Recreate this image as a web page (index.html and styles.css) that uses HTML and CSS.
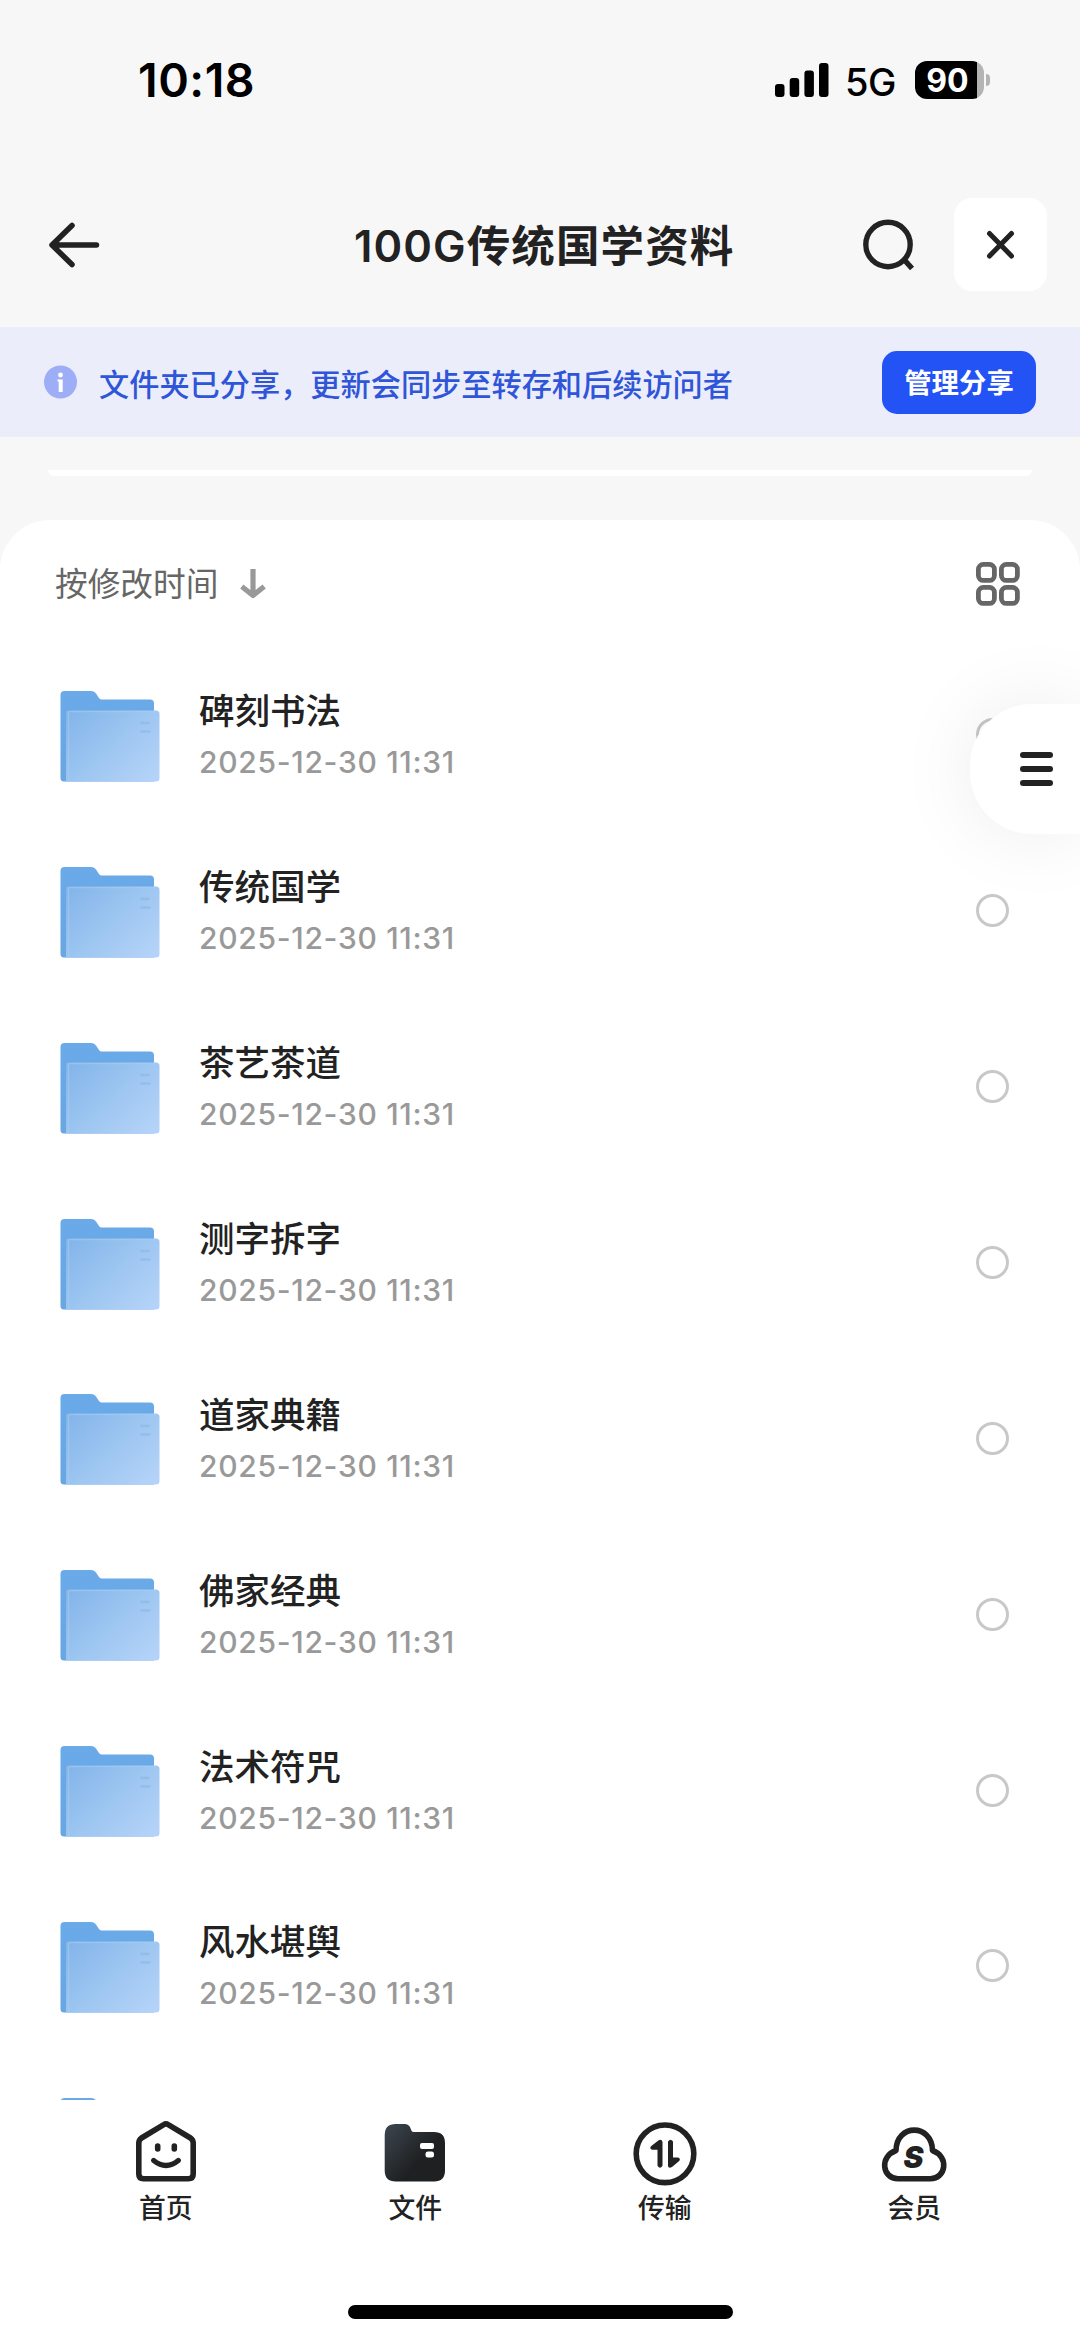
FILE: index.html
```html
<!DOCTYPE html>
<html lang="zh-CN">
<head>
    <meta charset="UTF-8">
    <meta name="viewport" content="width=device-width, initial-scale=1.0">
    <title>100G传统国学资料</title>
    <link rel="stylesheet" href="styles.css">
</head>
<body>
    <!-- shared folder icon -->
    <svg class="defs" width="0" height="0">
        <defs>
            <linearGradient id="folderBack" x1="0" y1="0" x2="0" y2="1">
                <stop offset="0" stop-color="#6aaae9"/>
                <stop offset="1" stop-color="#69a6e2"/>
            </linearGradient>
            <linearGradient id="folderFront" x1="0" y1="0.1" x2="1" y2="0.9">
                <stop offset="0" stop-color="#84b5ea"/>
                <stop offset="0.5" stop-color="#9dc6f1"/>
                <stop offset="1" stop-color="#b5d3f8"/>
            </linearGradient>
            <linearGradient id="tabFolder" x1="0" y1="0.1" x2="0.6" y2="0.6">
                <stop offset="0" stop-color="#3a444d"/>
                <stop offset="1" stop-color="#1f2021"/>
            </linearGradient>
            <symbol id="folder" viewBox="0 0 100 92">
                <path d="M.5 5q0-4 4-4h27q3 0 4.500 2.500l3 4.500q1 1.500 3 1.500h48q4 0 4 4v78h-90q-3.500 0-3.500-3.500z" fill="url(#folderBack)"/>
                <path d="M6 22q0-1.500 1.500-1.500h88.500q3.500 0 3.500 3.500v64q0 3.500-3.500 3.500h-90z" fill="url(#folderFront)"/>
                <path d="M8.500 91.500v-68q0-2 2-2h86" fill="none" stroke="#a9cdf3" stroke-width="1.500" opacity="0.5"/>
                <path d="M80.500 33h9M80.500 41.500h10" stroke="#84b0e0" stroke-width="2.500" opacity="0.45"/>
            </symbol>
        </defs>
    </svg>

    <div class="phone">
        <div class="status-bar">
            <span class="time">10:18</span>
            <div class="status-icons">
                <svg class="signal" width="54" height="34" viewBox="0 0 54 34">
                    <rect x="0" y="21" width="9.500" height="13" rx="3"/>
                    <rect x="14.700" y="15" width="9.500" height="19" rx="3"/>
                    <rect x="29.400" y="7.500" width="9.500" height="26.500" rx="3"/>
                    <rect x="44" y="0" width="9.500" height="34" rx="3"/>
                </svg>
                <span class="network">5G</span>
                <div class="battery"><span>90</span></div>
                <div class="battery-cap"></div>
            </div>
        </div>

        <header class="nav">
            <svg class="back" width="54" height="48" viewBox="0 0 54 48">
                <path d="M25 4.500L5 24L25 43.500M6 24h43.500" fill="none" stroke="#222" stroke-width="5.500" stroke-linecap="round" stroke-linejoin="round"/>
            </svg>
            <h1>100G传统国学资料</h1>
            <div class="nav-actions">
                <svg width="54" height="52" viewBox="0 0 54 52">
                    <circle cx="25" cy="25.500" r="22.200" fill="none" stroke="#222" stroke-width="5.400"/>
                    <path d="M41.500 41l7.500 8.500" stroke="#222" stroke-width="5.400"/>
                </svg>
                <div class="close">
                    <svg width="30" height="30" viewBox="0 0 30 30">
                        <path d="M3.500 3.500l22 22.500M25.500 3.500l-22 22.500" stroke="#222" stroke-width="5" stroke-linecap="round"/>
                    </svg>
                </div>
            </div>
        </header>

        <div class="notice">
            <svg width="34" height="34" viewBox="0 0 34 34">
                <circle cx="16.500" cy="17" r="16.500" fill="#9eaef6"/>
                <circle cx="16.500" cy="10" r="2.400" fill="#fff"/>
                <path d="M13.500 14.500h5.200v12.500h-4v-10.500h-1.200z" fill="#fff"/>
            </svg>
            <p>文件夹已分享，更新会同步至转存和后续访问者</p>
            <button>管理分享</button>
        </div>

        <div class="card-edge"></div>

        <main class="sheet">
            <div class="toolbar">
                <div class="sort">
                    <span>按修改时间</span>
                    <svg width="28" height="30" viewBox="0 0 28 30">
                        <path d="M14 0v26M2.800 17.500L14 26.500L25.200 17.500" fill="none" stroke="#999" stroke-width="5.200" stroke-linejoin="round" stroke-linecap="butt"/>
                    </svg>
                </div>
                <svg width="44" height="44" viewBox="0 0 44 44" fill="none" stroke="#666" stroke-width="4.800">
                    <rect x="2.400" y="2.400" width="16" height="16" rx="5"/>
                    <rect x="25.400" y="2.400" width="16" height="16" rx="5"/>
                    <rect x="2.400" y="25.400" width="16" height="16" rx="5"/>
                    <rect x="25.400" y="25.400" width="16" height="16" rx="5"/>
                </svg>
            </div>

            <ul class="file-list">
                <li class="file">
                    <svg class="folder"><use href="#folder"/></svg>
                    <div class="info"><h2>碑刻书法</h2><p>2025-12-30 11:31</p></div>
                    <span class="radio"></span>
                </li>
                <li class="file">
                    <svg class="folder"><use href="#folder"/></svg>
                    <div class="info"><h2>传统国学</h2><p>2025-12-30 11:31</p></div>
                    <span class="radio"></span>
                </li>
                <li class="file">
                    <svg class="folder"><use href="#folder"/></svg>
                    <div class="info"><h2>茶艺茶道</h2><p>2025-12-30 11:31</p></div>
                    <span class="radio"></span>
                </li>
                <li class="file">
                    <svg class="folder"><use href="#folder"/></svg>
                    <div class="info"><h2>测字拆字</h2><p>2025-12-30 11:31</p></div>
                    <span class="radio"></span>
                </li>
                <li class="file">
                    <svg class="folder"><use href="#folder"/></svg>
                    <div class="info"><h2>道家典籍</h2><p>2025-12-30 11:31</p></div>
                    <span class="radio"></span>
                </li>
                <li class="file">
                    <svg class="folder"><use href="#folder"/></svg>
                    <div class="info"><h2>佛家经典</h2><p>2025-12-30 11:31</p></div>
                    <span class="radio"></span>
                </li>
                <li class="file">
                    <svg class="folder"><use href="#folder"/></svg>
                    <div class="info"><h2>法术符咒</h2><p>2025-12-30 11:31</p></div>
                    <span class="radio"></span>
                </li>
                <li class="file">
                    <svg class="folder"><use href="#folder"/></svg>
                    <div class="info"><h2>风水堪舆</h2><p>2025-12-30 11:31</p></div>
                    <span class="radio"></span>
                </li>
                <li class="file">
                    <svg class="folder"><use href="#folder"/></svg>
                </li>
            </ul>
        </main>

        <nav class="tab-bar">
            <div class="tabs">
                <div class="tab">
                    <svg width="68" height="68" viewBox="0 0 68 68" fill="none" stroke="#222" stroke-width="5.600" stroke-linecap="round" stroke-linejoin="round">
                        <path d="M31.800 5.600q2.200-1.400 4.400 0l22.300 13.400q2.700 2 2.700 5v31q0 4.800-4.800 4.800h-44.800q-4.800 0-4.800-4.800v-31q0-3 2.700-5z"/>
                        <path d="M25.700 27v3M42.300 27v3"/>
                        <path d="M21.700 41.500q12.300 10 24.600 0" stroke-width="5.200"/>
                    </svg>
                    <span>首页</span>
                </div>
                <div class="tab">
                    <svg width="68" height="68" viewBox="0 0 68 68">
                        <path d="M3.700 16q0-11 11-11h9q4 0 5.500 3.500l1.200 3q.7 1.500 2.300 1.500h20.300q11 0 11 11v27.500q0 11-11 11h-38.300q-11 0-11-11z" fill="url(#tabFolder)"/>
                        <rect x="39" y="24" width="14" height="6" rx="2" fill="#fff"/>
                        <rect x="44.500" y="32.500" width="8.500" height="6" rx="2.500" fill="#fff"/>
                    </svg>
                    <span>文件</span>
                </div>
                <div class="tab">
                    <svg width="68" height="68" viewBox="0 0 68 68">
                        <circle cx="34" cy="34.800" r="28.800" fill="none" stroke="#222" stroke-width="5.600"/>
                        <path d="M27 21.700q3.500-2.200 4.500 1v24q-2.500 4-5 0v-16h-5q-3.500-1-1.500-3.500z" fill="#222"/>
                        <path d="M37 22.500q2.500-3.500 5 0v16h5q3 1 1.200 3.500l-7.200 6q-3.500 2-4-1z" fill="#222"/>
                    </svg>
                    <span>传输</span>
                </div>
                <div class="tab">
                    <svg width="68" height="68" viewBox="0 0 68 68">
                        <path d="M18 59.700H50.300C66 59.700 69.500 37.500 52.500 31.500C52 4.300 16.400 4.300 16 31.500C-1 37.500 2.300 59.700 18 59.700z" fill="none" stroke="#222" stroke-width="5.600" stroke-linejoin="round"/>
                        <text x="33.500" y="48.800" class="cloud-letter">S</text>
                    </svg>
                    <span>会员</span>
                </div>
            </div>
            <div class="home-indicator"></div>
        </nav>

        <div class="float-menu">
            <span></span>
            <span></span>
            <span></span>
        </div>
    </div>
</body>
</html>
```
FILE: styles.css
```css
* {
    box-sizing: border-box;
    margin: 0;
    padding: 0;
}
body {
    font-family: Inter, "Noto Sans CJK SC", sans-serif;
    background-color: #f7f7f7;
    color: #222;
}
svg {
    display: block;
    flex: none;
}
.defs {
    position: absolute;
}
.phone {
    position: relative;
    display: flex;
    flex-direction: column;
    width: 1080px;
    height: 2341px;
    overflow: hidden;
}

/* status bar */
.status-bar {
    display: flex;
    justify-content: space-between;
    align-items: center;
    height: 160px;
    padding: 0 90px 0 138px;
    color: #000;
}
.time {
    font-size: 46.500px;
    font-weight: 600;
    letter-spacing: 0.5px;
}
.status-icons {
    display: flex;
    align-items: center;
}
.network {
    width: 52px;
    margin: 3px 18px 0 16px;
    font-size: 38px;
    font-weight: 500;
    letter-spacing: -0.5px;
}
.battery {
    display: flex;
    justify-content: center;
    align-items: center;
    width: 69px;
    height: 38px;
    padding-right: 4px;
    border-radius: 12px;
    background: linear-gradient(to right, #000 62px, #b4b4b4 62px);
    color: #fff;
    font-size: 32px;
    font-weight: 700;
}
.battery-cap {
    width: 4px;
    height: 12px;
    margin-left: 2px;
    border-radius: 0 6px 6px 0;
    background-color: #b4b4b4;
}

/* title bar */
.nav {
    display: flex;
    align-items: center;
    height: 167px;
    padding: 2px 33px 0 47px;
}
.nav h1 {
    flex: 1;
    margin: -2px 0 0 253px;
    font-size: 43.500px;
    font-weight: 600;
    letter-spacing: 1.1px;
    white-space: nowrap;
}
.nav-actions {
    display: flex;
    align-items: center;
    gap: 37px;
}
.close {
    display: flex;
    justify-content: center;
    align-items: center;
    width: 93px;
    height: 93px;
    border-radius: 18px;
    background-color: #fff;
}

/* share notice */
.notice {
    display: flex;
    align-items: center;
    height: 110px;
    padding: 0 44px;
    background-color: #ebedfb;
}
.notice p {
    flex: 1;
    margin: 1px 0 0 21px;
    color: #2f55d8;
    font-size: 30.200px;
    font-weight: 500;
    white-space: nowrap;
}
.notice button {
    width: 154px;
    height: 63px;
    padding-bottom: 2px;
    border: none;
    border-radius: 15px;
    background-color: #2352f5;
    color: #fff;
    font-family: inherit;
    font-size: 27.400px;
    font-weight: 700;
}
.card-edge {
    flex: none;
    height: 6px;
    margin: 33px 48px 44px;
    border-radius: 0 0 12px 12px;
    background-color: #fff;
}

/* file list */
.sheet {
    flex: 1;
    min-height: 0;
    overflow: hidden;
    border-radius: 50px 50px 0 0;
    background-color: #fff;
}
.toolbar {
    display: flex;
    justify-content: space-between;
    align-items: center;
    height: 128px;
    padding-left: 55px;
    padding-right: 60px;
}
.sort {
    display: flex;
    align-items: center;
    gap: 21px;
    color: #666;
    font-size: 32.700px;
}
.sort span {
    margin-top: -5px;
}
.file-list {
    list-style: none;
}
.file {
    display: flex;
    align-items: center;
    height: 175.860px;
    padding: 0 71px 0 60px;
}
.folder {
    width: 100px;
    height: 92px;
}
.info {
    flex: 1;
    margin: 3px 0 0 39px;
}
.info h2 {
    font-size: 35.500px;
    font-weight: 500;
    line-height: 51px;
}
.info p {
    color: #999;
    font-size: 30px;
    font-weight: 500;
    letter-spacing: 0.7px;
    line-height: 51px;
}
.radio {
    width: 33px;
    height: 33px;
    margin-bottom: 2px;
    border: 3px solid #c8c8c8;
    border-radius: 50%;
}

/* bottom tabs */
.tab-bar {
    display: flex;
    flex-direction: column;
    justify-content: space-between;
    align-items: center;
    height: 241px;
    padding: 19px 0 22px;
    background-color: #fff;
}
.tabs {
    display: flex;
    width: 998px;
}
.tab {
    flex: 1;
    display: flex;
    flex-direction: column;
    align-items: center;
    gap: 1px;
    font-size: 26.800px;
    font-weight: 500;
    line-height: 40px;
}
.cloud-letter {
    font-size: 30px;
    font-style: italic;
    font-weight: 900;
    text-anchor: middle;
    fill: #222;
}
.home-indicator {
    width: 385px;
    height: 14px;
    border-radius: 7px;
    background-color: #000;
}

/* side menu button, sits over the list */
.float-menu {
    position: absolute;
    top: 704px;
    right: 0;
    display: flex;
    flex-direction: column;
    justify-content: center;
    gap: 8px;
    width: 110px;
    height: 130px;
    padding-left: 50px;
    border-radius: 62px 0 0 62px;
    background-color: #fff;
    box-shadow: 0 0 80px rgba(0, 0, 0, 0.08);
}
.float-menu span {
    width: 33px;
    height: 5.700px;
    border-radius: 3px;
    background-color: #222;
}
```
